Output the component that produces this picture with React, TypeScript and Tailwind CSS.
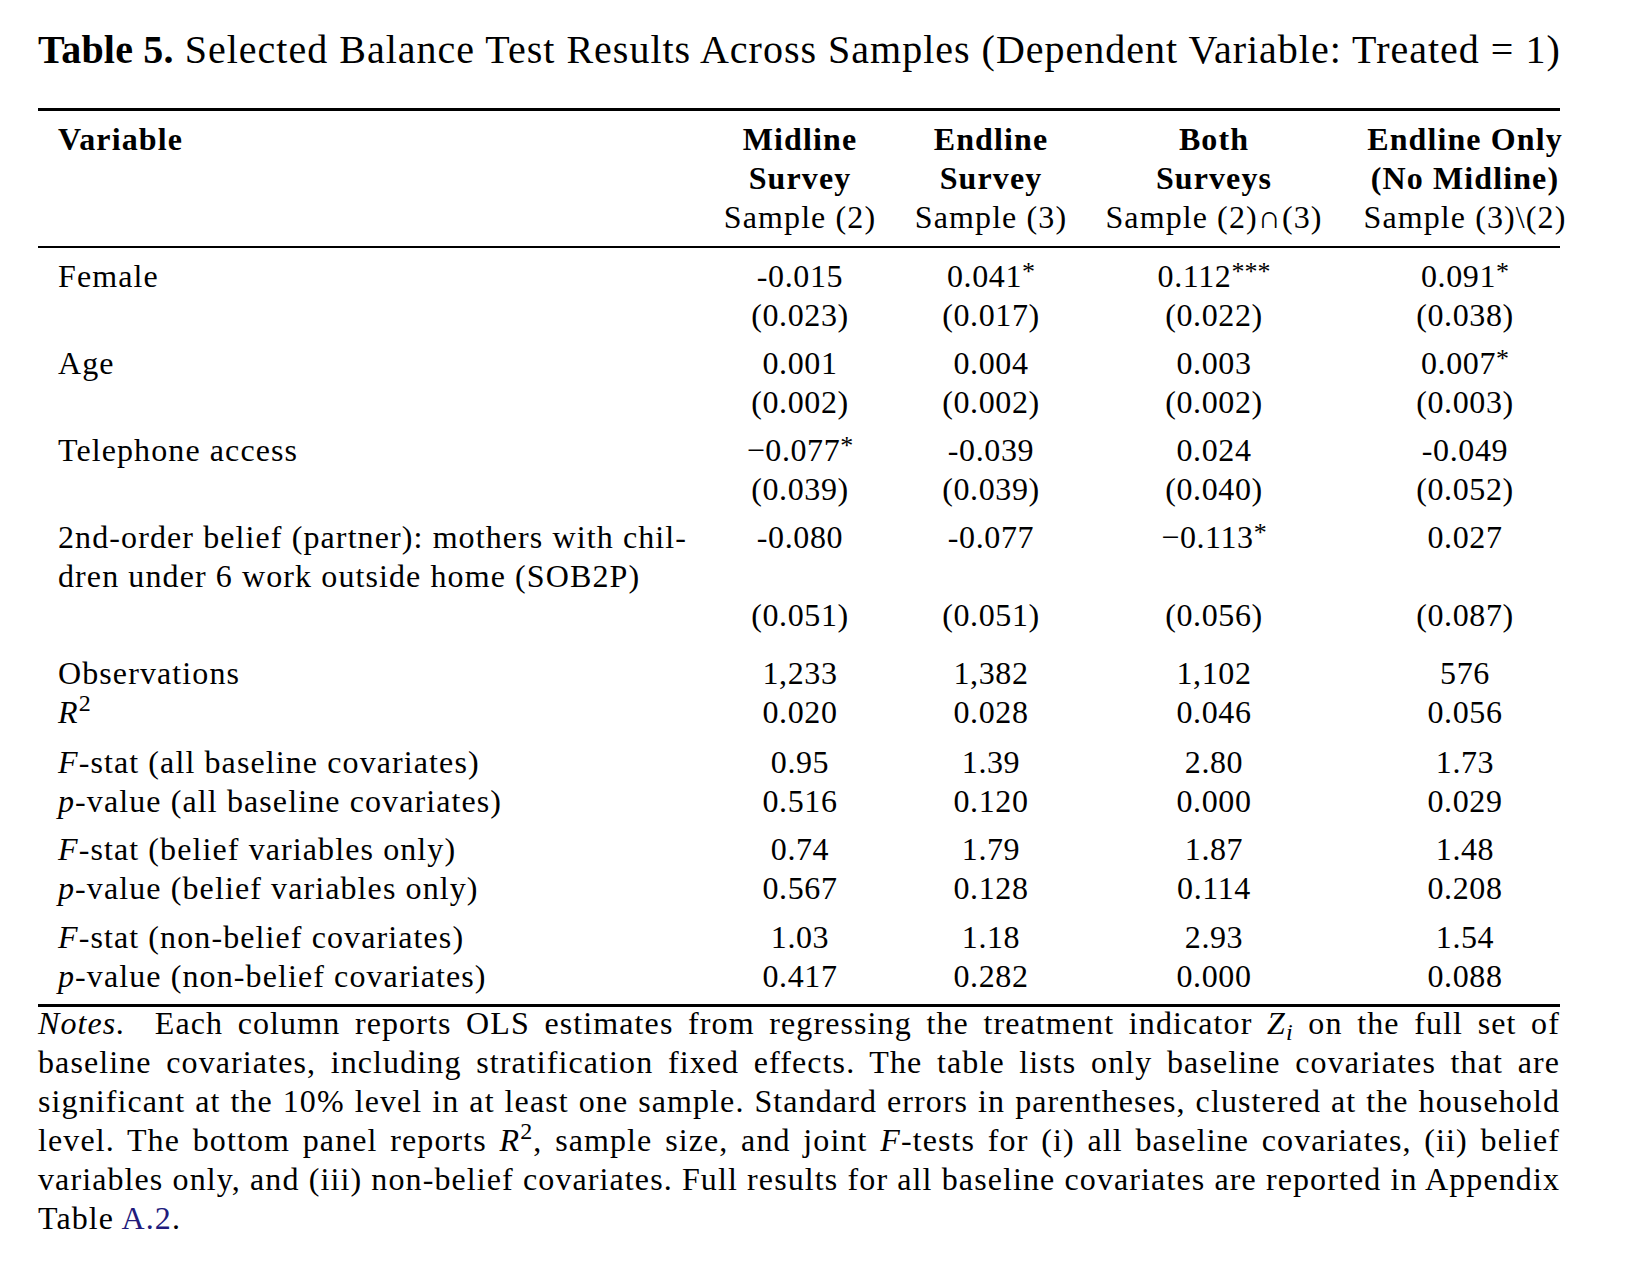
import React from "react";

type Group = {
  label: React.ReactNode[];
  cols: string[][];
  gap: string;
};

const groups: Group[] = [
  {
    label: ["Female"],
    cols: [
      ["-0.015", "(0.023)"],
      ["0.041*", "(0.017)"],
      ["0.112***", "(0.022)"],
      ["0.091*", "(0.038)"],
    ],
    gap: "pt-[9px]",
  },
  {
    label: ["Age"],
    cols: [
      ["0.001", "(0.002)"],
      ["0.004", "(0.002)"],
      ["0.003", "(0.002)"],
      ["0.007*", "(0.003)"],
    ],
    gap: "pt-[9px]",
  },
  {
    label: ["Telephone access"],
    cols: [
      ["\u22120.077*", "(0.039)"],
      ["-0.039", "(0.039)"],
      ["0.024", "(0.040)"],
      ["-0.049", "(0.052)"],
    ],
    gap: "pt-[9px]",
  },
  {
    label: [
      "2nd-order belief (partner): mothers with chil-",
      "dren under 6 work outside home (SOB2P)",
    ],
    cols: [
      ["-0.080", "", "(0.051)"],
      ["-0.077", "", "(0.051)"],
      ["\u22120.113*", "", "(0.056)"],
      ["0.027", "", "(0.087)"],
    ],
    gap: "pt-[9px]",
  },
  {
    label: [
      "Observations",
      <>
        <i>R</i>
        <sup>2</sup>
      </>,
    ],
    cols: [
      ["1,233", "0.020"],
      ["1,382", "0.028"],
      ["1,102", "0.046"],
      ["576", "0.056"],
    ],
    gap: "pt-[19px]",
  },
  {
    label: [
      <>
        <i>F</i>-stat (all baseline covariates)
      </>,
      <>
        <i>p</i>-value (all baseline covariates)
      </>,
    ],
    cols: [
      ["0.95", "0.516"],
      ["1.39", "0.120"],
      ["2.80", "0.000"],
      ["1.73", "0.029"],
    ],
    gap: "pt-[11px]",
  },
  {
    label: [
      <>
        <i>F</i>-stat (belief variables only)
      </>,
      <>
        <i>p</i>-value (belief variables only)
      </>,
    ],
    cols: [
      ["0.74", "0.567"],
      ["1.79", "0.128"],
      ["1.87", "0.114"],
      ["1.48", "0.208"],
    ],
    gap: "pt-[9px]",
  },
  {
    label: [
      <>
        <i>F</i>-stat (non-belief covariates)
      </>,
      <>
        <i>p</i>-value (non-belief covariates)
      </>,
    ],
    cols: [
      ["1.03", "0.417"],
      ["1.18", "0.282"],
      ["2.93", "0.000"],
      ["1.54", "0.088"],
    ],
    gap: "pt-[10px]",
  },
];

const headers = [
  ["Midline", "Survey", "Sample (2)"],
  ["Endline", "Survey", "Sample (3)"],
  ["Both", "Surveys", "Sample (2)\u2229(3)"],
  ["Endline Only", "(No Midline)", "Sample (3)\\(2)"],
];

function Value({ v }: { v: string }) {
  if (!v) return <div>{"\u00a0"}</div>;
  const m = v.match(/^(.*?)(\**)$/);
  const num = m ? m[1] : v;
  const stars = m ? m[2] : "";
  return (
    <div>
      {num}
      {stars && <span className="text-[26px] leading-none align-[7px] tracking-[0px]">{stars}</span>}
    </div>
  );
}

const grid = "grid grid-cols-[670px_184px_198px_248px_254px]";

function Line({ children, last }: { children: React.ReactNode; last?: boolean }) {
  return (
    <div className={last ? "" : "text-justify [text-align-last:justify]"}>{children}</div>
  );
}

export default function App() {
  return (
    <div className="w-[1650px] h-[1262px] bg-white text-black font-['Liberation_Serif','DejaVu_Serif',serif] overflow-hidden">
      <div className="w-[1522px] ml-[38px] pt-[26px]">
        <p className="text-[40px] leading-[48px] tracking-[1px] whitespace-nowrap">
          <b className="tracking-[0.2px]">Table 5.</b> Selected Balance Test Results Across Samples (Dependent Variable: Treated = 1)
        </p>

        <div className="mt-[34px] border-t-[3px] border-black text-[32px] leading-[39px] tracking-[1.1px]">
          {/* header */}
          <div className={`${grid} pt-[9px] pb-[9px]`}>
            <div className="pl-[20px] font-bold">Variable</div>
            {headers.map((h, i) => (
              <div key={i} className="text-center whitespace-nowrap">
                <div className="font-bold">{h[0]}</div>
                <div className="font-bold">{h[1]}</div>
                <div>{h[2]}</div>
              </div>
            ))}
          </div>

          {/* body */}
          <div className="border-t-2 border-b-[3px] border-black pb-[8px]">
            {groups.map((g, gi) => (
              <div key={gi} className={`${grid} ${g.gap}`}>
                <div className="pl-[20px] whitespace-nowrap">
                  {g.label.map((l, li) => (
                    <div key={li}>{l}</div>
                  ))}
                </div>
                {g.cols.map((c, ci) => (
                  <div key={ci} className="text-center whitespace-nowrap tracking-[0.6px]">
                    {c.map((v, vi) => (
                      <Value key={vi} v={v} />
                    ))}
                  </div>
                ))}
              </div>
            ))}
          </div>

          {/* notes */}
          <div className="-mt-[3px]">
            <Line>
              <i>Notes.</i>{"\u00a0"} Each column reports OLS estimates from regressing the treatment indicator{" "}
              <i>
                Z<sub>i</sub>
              </i>{" "}
              on the full set of
            </Line>
            <Line>
              baseline covariates, including stratification fixed effects. The table lists only baseline covariates that are
            </Line>
            <Line>
              significant at the 10% level in at least one sample. Standard errors in parentheses, clustered at the household
            </Line>
            <Line>
              level. The bottom panel reports <i>R</i>
              <sup>2</sup>, sample size, and joint <i>F</i>-tests for (i) all baseline covariates, (ii) belief
            </Line>
            <Line>
              variables only, and (iii) non-belief covariates. Full results for all baseline covariates are reported in Appendix
            </Line>
            <Line last>
              Table <span className="text-[#211b7c]">A.2</span>.
            </Line>
          </div>
        </div>
      </div>
    </div>
  );
}
